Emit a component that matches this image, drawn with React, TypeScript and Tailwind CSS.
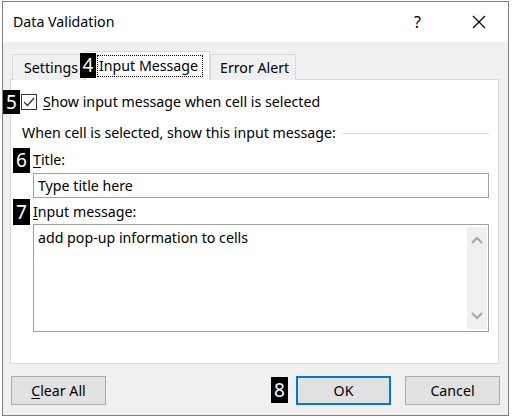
import React from "react";

const font = { fontFamily: '"Noto Sans", "Open Sans", sans-serif' };

function Badge({ n, cls }: { n: string; cls: string }) {
  return (
    <div
      className={`absolute z-30 bg-black text-white flex items-center justify-center text-[19px] leading-none ${cls}`}
    >
      {n}
    </div>
  );
}

function Chevron({ up }: { up?: boolean }) {
  return (
    <svg width="12" height="8" viewBox="0 0 12 8">
      <path
        d={up ? "M1 7 L6 2 L11 7" : "M1 1 L6 6 L11 1"}
        fill="none"
        stroke="#a6a6a6"
        strokeWidth="2"
      />
    </svg>
  );
}

export default function App() {
  return (
    <div
      className="relative w-[512px] h-[417px] bg-white overflow-hidden pl-[2px] pt-[1px] text-[14.2px] text-black"
      style={font}
    >
      <div className="w-[507px] h-[415px] border border-[#7f7f7f] bg-[#f0f0f0] flex flex-col">
        {/* Title bar */}
        <div className="h-[40px] bg-white flex items-center shrink-0">
          <span className="ml-[10px] text-[14.2px]">Data Validation</span>
          <span className="ml-auto mr-[51px] text-[16px]">?</span>
          <svg width="14" height="14" viewBox="0 0 14 14" className="mr-[22px]">
            <path d="M1 1 L13 13 M13 1 L1 13" stroke="#000" strokeWidth="1.2" />
          </svg>
        </div>
        {/* Body */}
        <div className="flex flex-col px-[7px] pt-[10px]">
          {/* Tabs */}
          <div className="flex items-end h-[28px] -mb-px relative z-10">
            <div className="ml-[2px] w-[73px] h-[26px] border border-b-0 border-[#d9d9d9] bg-[#f0f0f0] flex items-center pl-[11px]">
              Settings
            </div>
            <div className="w-[125px] h-[29px] border border-b-0 border-[#d9d9d9] bg-white flex items-center pl-[11px]">
              <span className="border border-dotted border-black px-[1px] h-[22px] w-[106px] flex items-center">
                Input Message
              </span>
            </div>
            <div className="w-[86px] h-[26px] border border-b-0 border-[#d9d9d9] bg-[#f0f0f0] flex items-center pl-[9px]">
              Error Alert
            </div>
          </div>
          {/* Panel */}
          <div className="w-[489px] h-[285px] border border-[#d9d9d9] bg-white flex flex-col">
            <div className="mt-[12px] h-[20px] flex items-center pl-[10px]">
              <div className="w-[16px] h-[16px] border border-[#333] bg-white flex items-center justify-center">
                <svg width="12" height="10" viewBox="0 0 12 10">
                  <path d="M1 5 L4.5 8.5 L11 1" fill="none" stroke="#333" strokeWidth="1.3" />
                </svg>
              </div>
              <span className="ml-[6px]">
                <u className="underline-offset-2">S</u>how input message when cell is selected
              </span>
            </div>
            <div className="mt-[11px] h-[20px] flex items-center pl-[11px] pr-[9px]">
              <span>When cell is selected, show this input message:</span>
              <div className="flex-1 ml-[6px] h-px bg-[#dcdcdc]" />
            </div>
            <div className="mt-[7px] h-[20px] flex items-center pl-[22px]">
              <span>
                <u className="underline-offset-2">T</u>itle:
              </span>
            </div>
            <div className="mt-[3px] ml-[22px] w-[456px] h-[25px] border border-[#a0a0a0] flex items-center pl-[4px]">
              Type title here
            </div>
            <div className="mt-[4px] h-[20px] flex items-center pl-[22px]">
              <span>
                <u className="underline-offset-2">I</u>nput message:
              </span>
            </div>
            <div className="mt-[2px] ml-[22px] w-[456px] h-[108px] border border-[#a0a0a0] flex">
              <div className="flex-1 pl-[4px] pt-[3px] leading-[20px]">add pop-up information to cells</div>
              <div className="mt-[2px] mb-[2px] mr-[1px] w-[20px] bg-[#f0f0f0] flex flex-col items-center justify-between py-[9px]">
                <Chevron up />
                <Chevron />
              </div>
            </div>
          </div>
          {/* Buttons */}
          <div className="mt-[12px] flex items-center h-[29px]">
            <button className="ml-[1px] w-[95px] h-[29px] border border-[#adadad] bg-[#e1e1e1] flex items-center justify-center">
              <span>
                <u className="underline-offset-2">C</u>lear All
              </span>
            </button>
            <button className="ml-[190px] w-[95px] h-[29px] border-2 border-[#0078d7] bg-[#e1e1e1] flex items-center justify-center">
              OK
            </button>
            <button className="ml-[14px] w-[95px] h-[29px] border border-[#adadad] bg-[#e1e1e1] flex items-center justify-center">
              Cancel
            </button>
          </div>
        </div>
      </div>
      <Badge n="4" cls="left-[80px] top-[53px] w-[16px] h-[25px]" />
      <Badge n="5" cls="left-[3px] top-[90px] w-[17px] h-[24px]" />
      <Badge n="6" cls="left-[13px] top-[148px] w-[17px] h-[25px]" />
      <Badge n="7" cls="left-[13px] top-[199px] w-[17px] h-[26px]" />
      <Badge n="8" cls="left-[271px] top-[377px] w-[17px] h-[26px]" />
    </div>
  );
}
